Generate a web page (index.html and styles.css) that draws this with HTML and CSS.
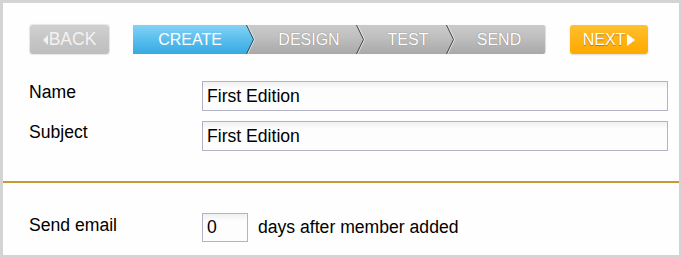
FILE: index.html
```html
<!DOCTYPE html>
<html lang="en">
<head>
  <meta charset="UTF-8" />
  <title>Autoresponder</title>
  <link rel="stylesheet" href="styles.css">
</head>
<body>
  <div class="frame">
    <div class="wizard">
      <button class="nav-btn back"><span class="tri-left"></span>BACK</button>
      <div class="steps">
        <span class="step active">CREATE</span>
        <span class="step step-design">DESIGN</span>
        <span class="step step-test">TEST</span>
        <span class="step step-send">SEND</span>
      </div>
      <button class="nav-btn next">NEXT<span class="tri-right"></span></button>
    </div>

    <div class="fields">
      <div class="row">
        <label class="label">Name</label>
        <input class="field" type="text" value="First Edition" />
      </div>
      <div class="row">
        <label class="label">Subject</label>
        <input class="field" type="text" value="First Edition" />
      </div>
    </div>

    <hr class="divider" />

    <div class="row send-row">
      <label class="label">Send email</label>
      <div class="days">
        <input class="field small" type="text" value="0" />
        <span>days after member added</span>
      </div>
    </div>
  </div>
</body>
</html>
```

FILE: styles.css
```css
* {
  box-sizing: border-box;
}
body {
  margin: 0;
  background: #fff;
  font-family: "Liberation Sans", Arial, sans-serif;
}

.frame {
  width: 682px;
  height: 258px;
  border: 3px solid #d4d4d4;
  background: #fefefe;
}

/* wizard bar */
.wizard {
  display: flex;
  align-items: center;
  margin: 22px 0 0 27px;
  height: 29px;
}

.nav-btn {
  height: 29px;
  border: none;
  border-radius: 3px;
  color: #fff;
  font-family: inherit;
  font-size: 16px;
  padding: 0;
  display: flex;
  align-items: center;
  justify-content: center;
}

.back {
  width: 79px;
  font-size: 17.5px;
  background: linear-gradient(#d0d0d0, #c6c6c6 50%, #bebebe);
  box-shadow: 0 0 1px 1px #e6e6e6;
  color: #f2f2f2;
}

.tri-left {
  width: 0;
  height: 0;
  border-top: 5px solid transparent;
  border-bottom: 5px solid transparent;
  border-right: 5px solid #f2f2f2;
  margin-right: 1px;
}

.next {
  width: 78px;
  margin-left: 25px;
  background: linear-gradient(#ffc12e, #ffb315 50%, #ffaa00);
  box-shadow: 0 1px 2px #d8d8d8;
  text-shadow: 0 1px 1px #b57400;
}

.tri-right {
  width: 0;
  height: 0;
  border-top: 6px solid transparent;
  border-bottom: 6px solid transparent;
  border-left: 8px solid #fff;
  margin-left: 2px;
}

.steps {
  display: flex;
  width: 412px;
  height: 29px;
  margin-left: 24px;
  background: linear-gradient(#cacaca, #c0c0c0 40%, #b4b4b4 70%, #a9a9a9);
  border-radius: 0 2px 2px 0;
  box-shadow: 1px 0 1px #dcdcdc;
}

.step {
  position: relative;
  display: flex;
  align-items: center;
  justify-content: center;
  font-size: 16px;
  color: #fff;
  text-shadow: 0 0 1px #6e6e6e;
}

.step.active {
  width: 118px;
  padding-right: 4px;
  text-shadow: none;
  z-index: 1;
}

.step.active::before {
  content: '';
  position: absolute;
  left: 0;
  top: 0;
  width: 122px;
  height: 100%;
  background: linear-gradient(#86d2f4, #5cc0ee 45%, #36a9e2);
  clip-path: polygon(0 0, 114px 0, 122px 50%, 114px 100%, 0 100%);
  z-index: -1;
}

.step-design { width: 110px; padding-left: 6px; }
.step-test { width: 90px; padding-left: 4px; }
.step-send { width: 94px; padding-left: 2px; }

.step:not(:last-child)::after {
  content: '';
  position: absolute;
  right: -4px;
  top: 0;
  width: 9px;
  height: 100%;
  background: url("data:image/svg+xml,%3Csvg xmlns='http://www.w3.org/2000/svg' width='9' height='29'%3E%3Cpolyline points='0.5,0 7.5,14.5 0.5,29' fill='none' stroke='%23ececec' stroke-width='1' transform='translate(1 0)'/%3E%3Cpolyline points='0.5,0 7.5,14.5 0.5,29' fill='none' stroke='%23444' stroke-width='1'/%3E%3C/svg%3E") no-repeat;
}

/* form */
.fields {
  margin: 27px 0 0 26px;
  display: flex;
  flex-direction: column;
  gap: 10px;
}

.row {
  display: flex;
  align-items: flex-start;
}

.label {
  width: 173px;
  font-size: 17.6px;
  line-height: 20px;
  color: #000;
  padding-top: 1px;
}

.field {
  width: 466px;
  height: 30px;
  border: 1px solid #b3b3c8;
  background: linear-gradient(#f0f0f0, #fdfdfd 7px, #fdfdfd);
  font-family: inherit;
  font-size: 17.6px;
  color: #000;
  padding: 0 4px;
  outline: none;
}

.divider {
  border: none;
  height: 2px;
  background: #c99a34;
  margin: 30px 0 0;
}

.send-row {
  margin: 30px 0 0 26px;
}

.send-row .label {
  padding-top: 2px;
}

.days {
  display: flex;
  align-items: center;
  gap: 10px;
  font-size: 17.6px;
  color: #000;
}

.field.small {
  width: 46px;
  height: 29px;
}
```
